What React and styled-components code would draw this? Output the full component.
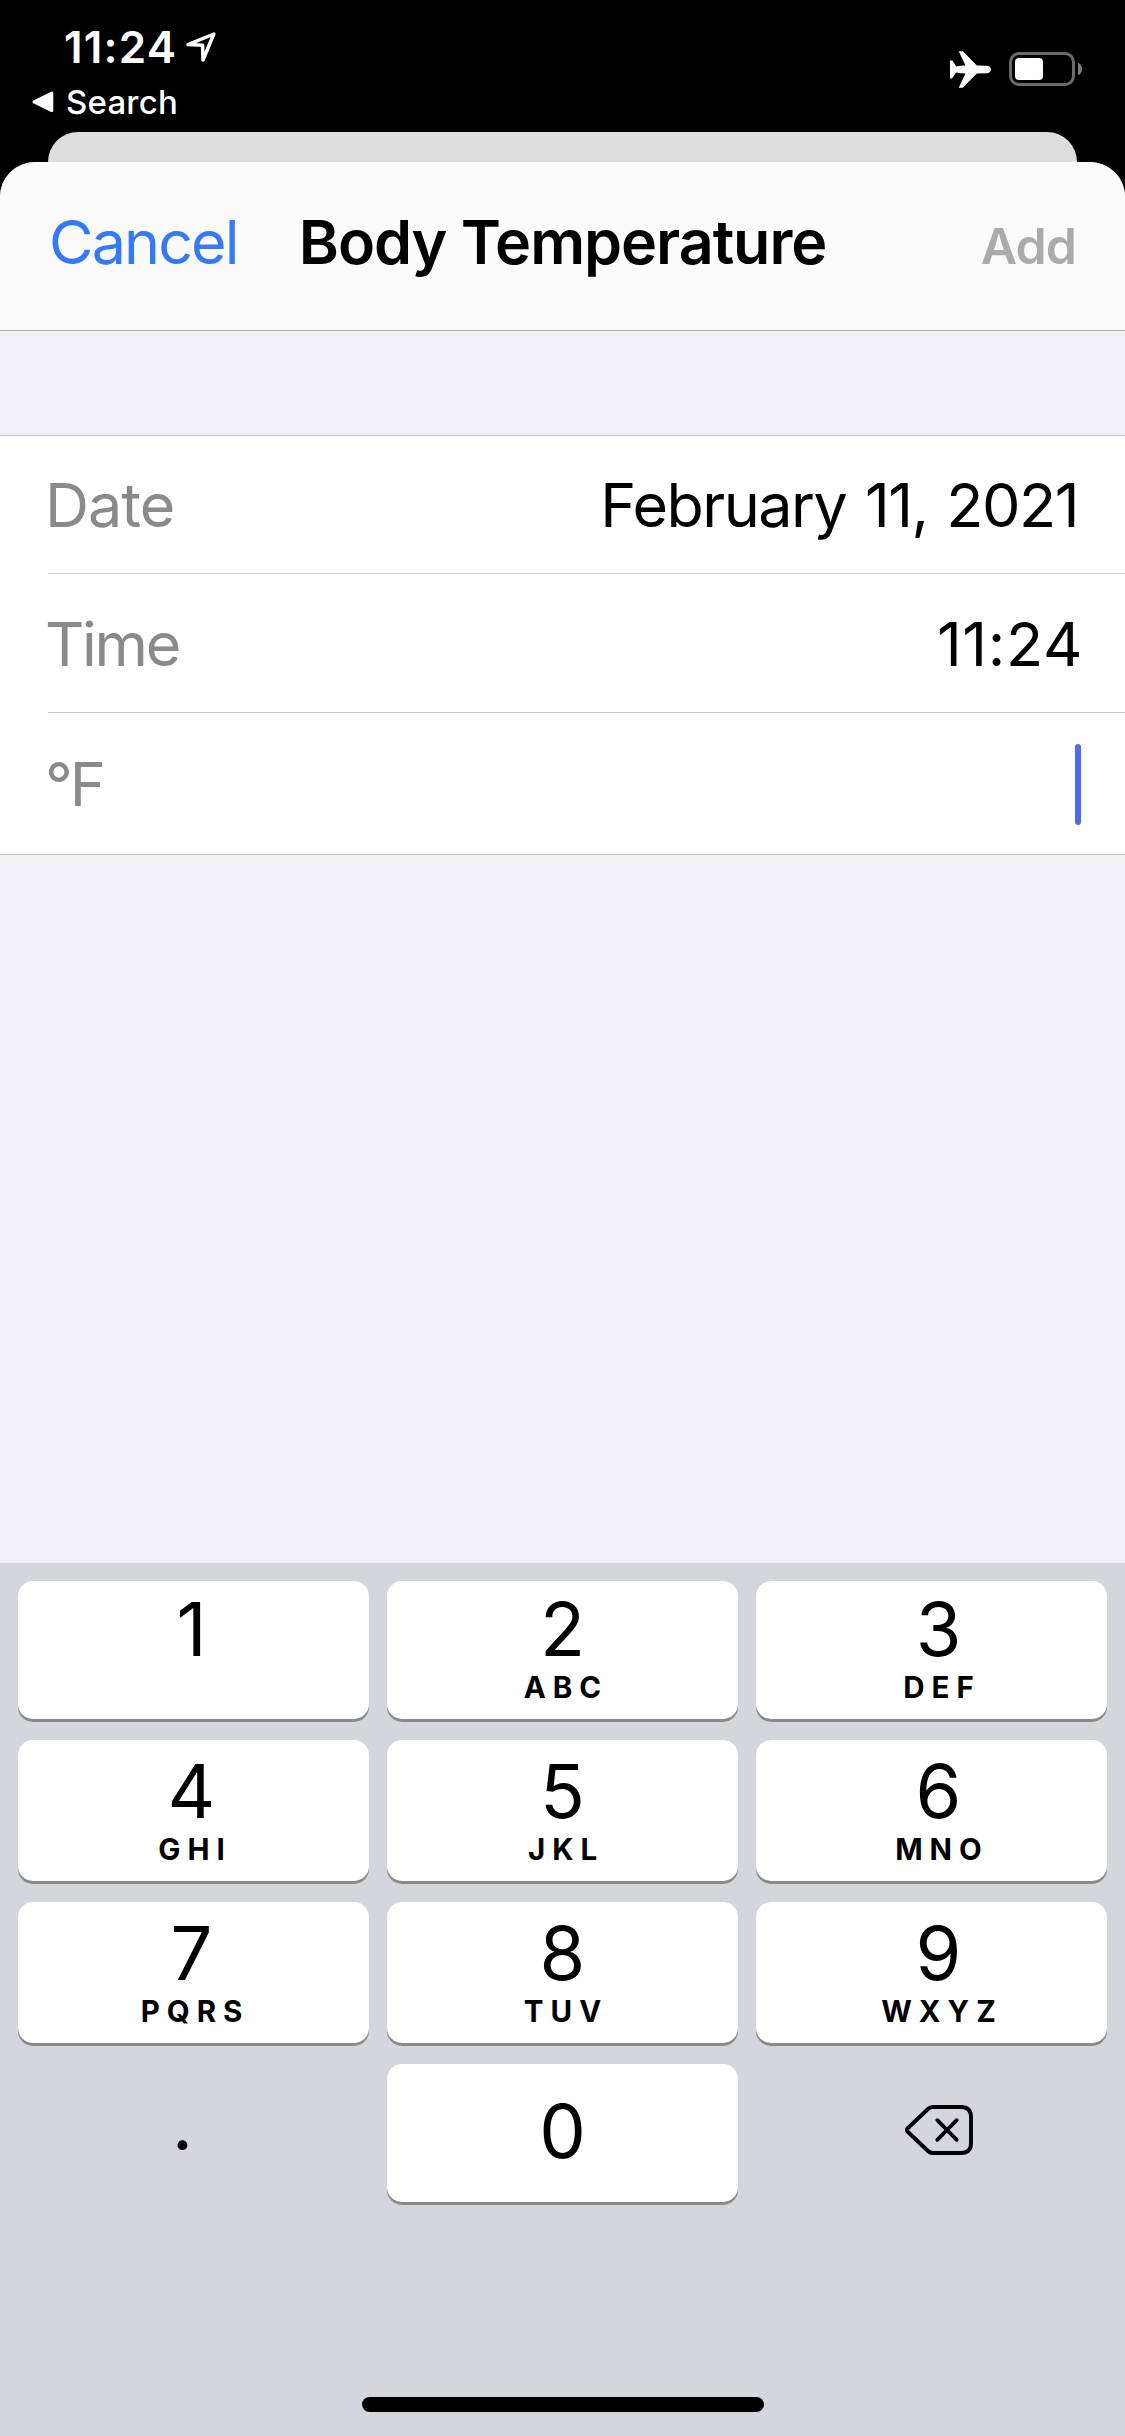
import React from "react";
import styled, { createGlobalStyle } from "styled-components";

const GlobalStyle = createGlobalStyle`
  * {
    box-sizing: border-box;
  }

  body {
    margin: 0;
    background: #000;
    font-family: "Inter", "Liberation Sans", sans-serif;
  }
`;

const Screen = styled.div`
  display: flex;
  flex-direction: column;
  width: 1125px;
  height: 2436px;
  overflow: hidden;
  background: #000;
`;

const StatusBar = styled.header`
  display: flex;
  justify-content: space-between;
  height: 132px;
  color: #fff;
`;

const StatusLeft = styled.div`
  display: flex;
  flex-direction: column;
  gap: 8px;
  padding-top: 20px;
`;

const Clock = styled.div`
  display: flex;
  align-items: center;
  gap: 9px;
  padding-left: 64px;
  font-size: 44px;
  font-weight: 600;
  line-height: 54px;
  letter-spacing: 1.2px;
`;

const BackToApp = styled.div`
  display: flex;
  align-items: center;
  gap: 12px;
  padding-left: 32px;
  font-size: 33px;
  font-weight: 500;
  line-height: 40px;
  letter-spacing: 0.2px;
`;

const StatusRight = styled.div`
  display: flex;
  align-items: center;
  gap: 18px;
  height: 138px;
  padding-right: 43px;
`;

const BackCard = styled.div`
  flex: none;
  height: 64px;
  margin: 0 48px -34px;
  border-radius: 30px 30px 0 0;
  background: #ddd;
`;

const Sheet = styled.main`
  display: flex;
  flex-direction: column;
  flex: 1;
  z-index: 1;
  border-radius: 35px 35px 0 0;
  overflow: hidden;
  background: #f1f0f6;
`;

const NavBar = styled.nav`
  display: grid;
  grid-template-columns: 1fr auto 1fr;
  align-items: baseline;
  height: 169px;
  padding: 43px 49px 0;
  border-bottom: 1px solid #a9a9ac;
  background: #fbfbfc;
  line-height: 74px;
`;

const Cancel = styled.span`
  color: #3479f6;
  font-size: 61px;
  letter-spacing: -1.9px;
`;

const Title = styled.h1`
  margin: 0;
  color: #000;
  font-size: 61px;
  font-weight: 600;
  letter-spacing: -1.05px;
`;

const Add = styled.span`
  justify-self: end;
  color: #ababac;
  font-size: 50px;
  font-weight: 600;
  letter-spacing: -0.9px;
`;

const Form = styled.section`
  margin-top: 104px;
  padding-left: 48px;
  border-top: 1px solid #c6c5ca;
  border-bottom: 1px solid #c6c5ca;
  background: #fff;
`;

const Row = styled.div`
  display: flex;
  align-items: center;
  justify-content: space-between;
  height: ${props => props.$height}px;
  padding-right: 44px;
  font-size: 61px;
  line-height: 74px;

  & + & {
    padding-top: 1px;
    border-top: 1px solid #c6c6c8;
  }
`;

const Label = styled.span`
  margin-left: -3px;
  color: #8a8a8c;
  letter-spacing: ${props => props.$tracking}px;
`;

const Value = styled.span`
  margin-right: ${props => props.$outdent}px;
  color: #000;
  letter-spacing: ${props => props.$tracking}px;
  word-spacing: 3px;
`;

const Caret = styled.i`
  width: 6px;
  height: 81px;
  border-radius: 3px;
  background: #4e6cec;
`;

const Keyboard = styled.section`
  display: flex;
  flex-direction: column;
  align-items: center;
  justify-content: space-between;
  height: 873px;
  margin-top: auto;
  padding: 18px 18px 24px;
  background: #d5d6db;
`;

const Keys = styled.div`
  display: grid;
  grid-template-columns: repeat(3, 351px);
  grid-template-rows: 138px 141px 141px 138px;
  gap: 21px 18px;
`;

const Key = styled.div`
  display: flex;
  flex-direction: column;
  align-items: center;
  padding: ${props => props.$padding};
  border-radius: 15px;
  background: #fff;
  box-shadow: 0 3px 0 #898a8d;
`;

const PlainKey = styled(Key)`
  justify-content: center;
  background: none;
  box-shadow: none;
`;

const Digit = styled.span`
  font-size: 74px;
  line-height: 60px;
`;

const Letters = styled.span`
  margin: 13px -7px 0 0;
  font-size: 29.5px;
  font-weight: 700;
  line-height: 30px;
  letter-spacing: 7px;
`;

const HomeIndicator = styled.div`
  width: 402px;
  height: 15px;
  border-radius: 8px;
  background: #000;
`;

const LocationIcon = () => (
  <svg width="30" height="30" viewBox="0 0 30 30" fill="none">
    <path d="M2 12.6 27.8 2 17 28 16.6 13.2Z" stroke="#fff" strokeWidth="3.5" strokeLinejoin="round" />
  </svg>
);

const BackIcon = () => (
  <svg width="22" height="22" viewBox="0 0 22 22">
    <path d="M2 10.8 19.8 2V19.6Z" fill="#fff" stroke="#fff" strokeWidth="3" strokeLinejoin="round" />
  </svg>
);

const AirplaneIcon = () => (
  <svg width="41" height="37" viewBox="0 0 122 110">
    <path
      d="M0 28h7l12 18c8-2 18-3 27-3L26 1h12l42 42 29 1c17 0 17 22 0 22l-29 1-42 42H26l20-42c-10 0-19-1-28-3L6 82H0Z"
      fill="#fff"
    />
  </svg>
);

const BatteryIcon = () => (
  <svg width="73" height="34" viewBox="0 0 73 34">
    <rect x="1.5" y="1.5" width="63" height="31" rx="8.5" fill="none" stroke="#6b6b6b" strokeWidth="3" />
    <rect x="6" y="6" width="28" height="22" rx="4" fill="#fff" />
    <path d="M69 10.7c5.3 2 5.3 10.6 0 12.6Z" fill="#7f7f7f" />
  </svg>
);

const DeleteIcon = () => (
  <svg width="68" height="50" viewBox="0 0 68 50" fill="none" stroke="#000" strokeLinecap="round" strokeLinejoin="round">
    <path
      d="M28 2H56Q66 2 66 12V38Q66 48 56 48H28Q25 48 23 46L3 27Q1 25 3 23L23 4Q25 2 28 2Z"
      strokeWidth="3.9"
    />
    <path d="M32.3 15.2 51.7 34.8M51.7 15.2 32.3 34.8" strokeWidth="3.8" />
  </svg>
);

const digitKeys = [
  { digit: "1" },
  { digit: "2", letters: "ABC" },
  { digit: "3", letters: "DEF" },
  { digit: "4", letters: "GHI" },
  { digit: "5", letters: "JKL" },
  { digit: "6", letters: "MNO" },
  { digit: "7", letters: "PQRS" },
  { digit: "8", letters: "TUV" },
  { digit: "9", letters: "WXYZ" },
];

// outer columns lean left and right of centre a little
function keyPadding(index) {
  const top = index < 3 ? 18 : 21;
  return [`${top}px 4px 0 0`, `${top}px 0 0`, `${top}px 0 0 14px`][index % 3];
}

export default function App() {
  return (
    <Screen>
      <GlobalStyle />
      <StatusBar>
        <StatusLeft>
          <Clock>
            11:24
            <LocationIcon />
          </Clock>
          <BackToApp>
            <BackIcon />
            Search
          </BackToApp>
        </StatusLeft>
        <StatusRight>
          <AirplaneIcon />
          <BatteryIcon />
        </StatusRight>
      </StatusBar>
      <BackCard />
      <Sheet>
        <NavBar>
          <Cancel>Cancel</Cancel>
          <Title>Body Temperature</Title>
          <Add>Add</Add>
        </NavBar>
        <Form>
          <Row $height={137}>
            <Label $tracking={-1}>Date</Label>
            <Value $tracking={-1.5} $outdent={3}>
              February 11, 2021
            </Value>
          </Row>
          <Row $height={139}>
            <Label $tracking={-2.3}>Time</Label>
            <Value $tracking={0.65} $outdent={-2}>
              11:24
            </Value>
          </Row>
          <Row $height={142}>
            <Label $tracking={-3}>°F</Label>
            <Caret />
          </Row>
        </Form>
        <Keyboard>
          <Keys>
            {digitKeys.map(({ digit, letters }, i) => (
              <Key key={digit} $padding={keyPadding(i)}>
                <Digit>{digit}</Digit>
                {letters && <Letters>{letters}</Letters>}
              </Key>
            ))}
            <PlainKey $padding="0 22px 21px 0">
              <Digit>.</Digit>
            </PlainKey>
            <Key $padding="37px 0 0">
              <Digit>0</Digit>
            </Key>
            <PlainKey $padding="0 0 6px 15px">
              <DeleteIcon />
            </PlainKey>
          </Keys>
          <HomeIndicator />
        </Keyboard>
      </Sheet>
    </Screen>
  );
}
